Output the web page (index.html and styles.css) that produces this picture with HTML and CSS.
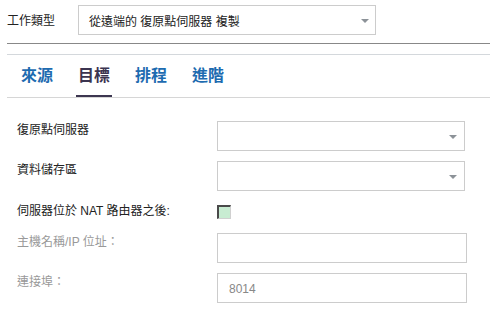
FILE: index.html
```html
<!DOCTYPE html>
<html>
<head>
    <meta charset="utf-8">
    <title>工作類型 - 目標</title>
    <link rel="stylesheet" href="styles.css">
</head>
<body>

<div class="job-row">
    <div class="job-label">工作類型</div>
    <div class="select job-select">
        <span>從遠端的 復原點伺服器 複製</span>
        <span class="arrow"></span>
    </div>
</div>

<div class="rule-dark"></div>
<div class="rule-light"></div>

<div class="tabs">
    <a class="tab">來源</a>
    <a class="tab active">目標</a>
    <a class="tab">排程</a>
    <a class="tab">進階</a>
</div>

<div class="form">
    <div class="form-row">
        <div class="form-label">復原點伺服器</div>
        <div class="select field-select"><span></span><span class="arrow"></span></div>
    </div>
    <div class="form-row">
        <div class="form-label">資料儲存區</div>
        <div class="select field-select"><span></span><span class="arrow"></span></div>
    </div>
    <div class="form-row check-row">
        <div class="form-label">伺服器位於 NAT 路由器之後:</div>
        <div class="checkbox"></div>
    </div>
    <div class="form-row disabled">
        <div class="form-label">主機名稱/IP 位址：</div>
        <div class="text-input"></div>
    </div>
    <div class="form-row disabled">
        <div class="form-label">連接埠：</div>
        <div class="text-input">8014</div>
    </div>
</div>

</body>
</html>
```

FILE: styles.css
```css
body {
    margin: 0;
    font-family: "Liberation Sans", "Noto Sans CJK TC", sans-serif;
    font-size: 12px;
    color: #222;
    background-color: #fff;
}

.job-row {
    display: flex;
    align-items: center;
    padding: 5px 0 0 7px;
}
.job-label {
    width: 71px;
    margin-top: -2px;
}

.select {
    display: flex;
    justify-content: space-between;
    align-items: center;
    box-sizing: border-box;
    height: 30px;
    border: 1px solid #cccccc;
    background-color: #fff;
}
.job-select {
    width: 298px;
    padding: 0 6px 0 10px;
}
.field-select {
    width: 248px;
    padding: 0 7px 0 10px;
}
.arrow {
    width: 0;
    height: 0;
    border-left: 4px solid transparent;
    border-right: 4px solid transparent;
    border-top: 4px solid #8c9298;
    margin-top: 1px;
}

.rule-dark {
    margin: 8px 0 0 7px;
    height: 1px;
    background-color: #888888;
}
.rule-light {
    margin: 10px 0 0 7px;
    height: 1px;
    background-color: #d4d8dc;
}

.tabs {
    display: flex;
    gap: 21px;
    margin-left: 7px;
    padding-left: 12px;
    border-bottom: 1px solid #d6d6d6;
}
.tab {
    display: block;
    padding: 11px 2px 9px;
    line-height: 20px;
    font-size: 16px;
    font-weight: bold;
    color: #1d6bb0;
    border-bottom: 2px solid transparent;
    cursor: pointer;
}
.tab.active {
    color: #3b3450;
    border-bottom-color: #3c3650;
}

.form {
    display: flex;
    flex-direction: column;
    gap: 10px;
    padding: 23px 0 0 17px;
}
.form-row {
    display: flex;
    align-items: flex-start;
}
.form-label {
    width: 200px;
    padding-top: 1px;
    line-height: 16px;
}
.check-row {
    align-items: center;
    height: 22px;
}
.check-row .form-label {
    padding-top: 0;
    margin-top: -2px;
}
.checkbox {
    box-sizing: border-box;
    width: 14px;
    height: 14px;
    border-style: solid;
    border-width: 2px 1px 1px 2px;
    border-color: #4a4a4a #d0d0d0 #d0d0d0 #4a4a4a;
    background-color: #c8ecd2;
}
.disabled .form-label {
    color: #999999;
}
.text-input {
    box-sizing: border-box;
    width: 250px;
    height: 30px;
    padding: 0 11px;
    line-height: 28px;
    border: 1px solid #cccccc;
    color: #888888;
}
.text-input:not(:empty) {
    line-height: 30px;
}
```
